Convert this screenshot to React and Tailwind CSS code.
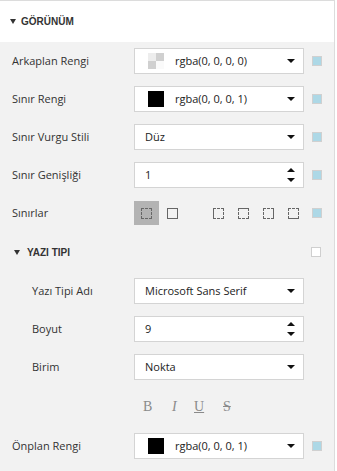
import React from "react";

const font = { fontFamily: '"Open Sans", "Liberation Sans", sans-serif' };

// Küçük açık mavi kare (sıfırlama göstergesi)
const Marker = () => (
  <span className="block w-[10px] h-[10px] border border-[#d0d0d0] bg-[#add8e6]" />
);

const Caret = () => (
  <svg width="8" height="4" viewBox="0 0 8 4" className="shrink-0">
    <path d="M0 0h8L4 4z" fill="#111" />
  </svg>
);

const Spinner = () => (
  <div className="flex flex-col gap-[6px] shrink-0">
    <svg width="8" height="4" viewBox="0 0 8 4">
      <path d="M0 4h8L4 0z" fill="#111" />
    </svg>
    <svg width="8" height="4" viewBox="0 0 8 4">
      <path d="M0 0h8L4 4z" fill="#111" />
    </svg>
  </div>
);

const Box = ({ children }) => (
  <div className="w-[170px] h-[26px] bg-white border border-[#d4d4d4] flex items-center pl-[10px] pr-[8px] text-[11px] text-[#222]">
    {children}
  </div>
);

const Swatch = ({ transparent }) =>
  transparent ? (
    <span className="w-[16px] h-[16px] ml-[3px] mr-[11px] grid grid-cols-2 grid-rows-2 shrink-0">
      <span className="bg-[#ededed]" />
      <span className="bg-[#d0d0d0]" />
      <span className="bg-[#d0d0d0]" />
      <span className="bg-[#fafafa]" />
    </span>
  ) : (
    <span className="w-[16px] h-[16px] ml-[3px] mr-[11px] bg-black shrink-0" />
  );

const Row = ({ label, indent, children, marker = true }) => (
  <div className="h-[38px] flex items-center">
    <div className={`${indent ? "pl-[32px]" : "pl-[12px]"} w-[134px] text-[11px] text-[#333]`}>{label}</div>
    {children}
    <div className="ml-[8px]">{marker ? <Marker /> : null}</div>
  </div>
);

const BorderIcon = ({ solid }) => {
  const side = (s) => (solid === "all" || solid === s ? "solid" : "dashed");
  return (
    <span
      className="block w-[11px] h-[11px] border-[#666]"
      style={{
        borderWidth: 1,
        borderTopStyle: side("top"),
        borderRightStyle: side("right"),
        borderBottomStyle: side("bottom"),
        borderLeftStyle: side("left"),
      }}
    />
  );
};

const SectionCaret = () => (
  <svg width="6" height="5" viewBox="0 0 6 5">
    <path d="M0 0h6L3 5z" fill="#333" />
  </svg>
);

export default function App() {
  return (
    <div className="w-[335px] h-[471px] border-t border-r border-[#dcdcdc] bg-[#f2f2f2] overflow-hidden" style={font}>
      <div className="h-[41px] bg-white flex items-center pl-[10px] gap-[5px]">
        <SectionCaret />
        <span className="text-[10px] font-bold text-[#333]" style={{ fontFamily: '"Liberation Sans", Arial, sans-serif' }}>
          GÖRÜNÜM
        </span>
      </div>

      <Row label="Arkaplan Rengi">
        <Box>
          <Swatch transparent />
          <span className="flex-1">rgba(0, 0, 0, 0)</span>
          <Caret />
        </Box>
      </Row>
      <Row label="Sınır Rengi">
        <Box>
          <Swatch />
          <span className="flex-1">rgba(0, 0, 0, 1)</span>
          <Caret />
        </Box>
      </Row>
      <Row label="Sınır Vurgu Stili">
        <Box>
          <span className="flex-1">Düz</span>
          <Caret />
        </Box>
      </Row>
      <Row label="Sınır Genişliği">
        <Box>
          <span className="flex-1">1</span>
          <Spinner />
        </Box>
      </Row>
      <Row label="Sınırlar">
        <div className="w-[170px] flex items-center">
          <div className="w-[25px] h-[24px] bg-[#b3b3b3] flex items-center justify-center">
            <BorderIcon solid="none" />
          </div>
          <div className="ml-[8px]"><BorderIcon solid="all" /></div>
          <div className="ml-[35px] flex gap-[14px]">
            <BorderIcon solid="left" />
            <BorderIcon solid="top" />
            <BorderIcon solid="right" />
            <BorderIcon solid="bottom" />
          </div>
        </div>
      </Row>

      <div className="h-[40px] flex items-center">
        <div className="pl-[14px] flex items-center gap-[7px] w-[311px]">
          <SectionCaret />
          <span className="text-[10px] font-bold text-[#333]" style={{ fontFamily: '"Liberation Sans", Arial, sans-serif' }}>
            YAZI TIPI
          </span>
        </div>
        <span className="block w-[10px] h-[10px] border border-[#cfcfcf] bg-white" />
      </div>

      <Row label="Yazı Tipi Adı" indent marker={false}>
        <Box>
          <span className="flex-1">Microsoft Sans Serif</span>
          <Caret />
        </Box>
      </Row>
      <Row label="Boyut" indent marker={false}>
        <Box>
          <span className="flex-1">9</span>
          <Spinner />
        </Box>
      </Row>
      <Row label="Birim" indent marker={false}>
        <Box>
          <span className="flex-1">Nokta</span>
          <Caret />
        </Box>
      </Row>

      <div className="h-[41px] flex items-center pl-[143px] text-[14px] text-[#8a8a8a]" style={{ fontFamily: '"Liberation Serif", serif' }}>
        <span className="w-[29px]">B</span>
        <span className="w-[22px] italic">I</span>
        <span className="w-[29px] underline">U</span>
        <span className="line-through">S</span>
      </div>

      <Row label="Önplan Rengi">
        <Box>
          <Swatch />
          <span className="flex-1">rgba(0, 0, 0, 1)</span>
          <Caret />
        </Box>
      </Row>
    </div>
  );
}
